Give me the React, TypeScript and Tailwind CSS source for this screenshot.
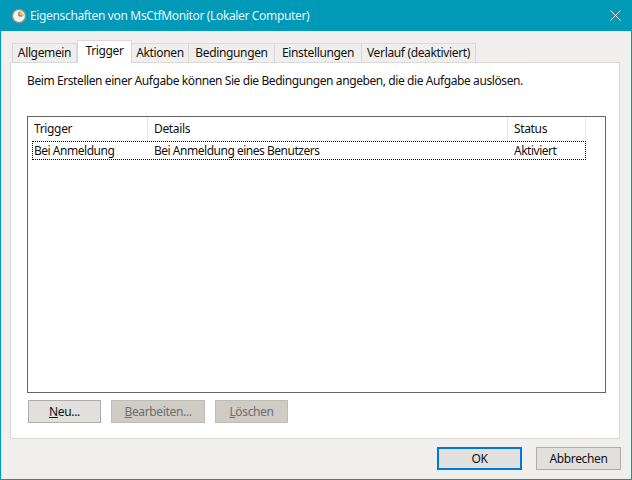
import React from 'react';

const tabs = [
  { label: 'Allgemein', width: 'w-[65px]' },
  { label: 'Trigger', width: 'w-[55px]', active: true },
  { label: 'Aktionen', width: 'w-[57px]' },
  { label: 'Bedingungen', width: 'w-[86px]' },
  { label: 'Einstellungen', width: 'w-[87px]' },
  { label: 'Verlauf (deaktiviert)', width: 'w-[114px]' },
];

function ClockIcon() {
  return (
    <svg width="16" height="16" viewBox="0 0 16 16" aria-hidden="true">
      <circle cx="8" cy="8" r="6.6" fill="#f4f2ec" stroke="#8f8f8a" strokeWidth="1.4" />
      <path d="M8 3 A5 5 0 0 1 13 8 L8 8 Z" fill="#f2c777" />
      <path d="M8 4v4h3.4" fill="none" stroke="#5d5d5d" strokeWidth="1" />
    </svg>
  );
}

function DialogButton({ width, disabled, primary, accel, rest }: { width: string; disabled?: boolean; primary?: boolean; accel?: string; rest: string }) {
  const look = primary
    ? 'border-2 border-[#0078d7] bg-[#e1e0dc] text-[#111]'
    : disabled
      ? 'border border-[#bfbcb6] bg-[#cfccc6] text-[#6d6d6d]'
      : 'border border-[#adadad] bg-[#e1e0dc] text-[#111]';
  return (
    <div className={`flex h-[23px] items-center justify-center text-[12px] ${width} ${look}`}>
      {accel && <span className="underline">{accel}</span>}
      {rest}
    </div>
  );
}

export default function App() {
  return (
    <div className="flex h-[480px] w-[632px] flex-col border-x border-b border-[#0099b8] bg-[#f0efed] font-['Noto_Sans',sans-serif] text-[12px] leading-[16px] tracking-[-0.35px] text-[#111]">
      <div className="flex h-[31px] shrink-0 items-center bg-[#0099b8] pl-[10px] pr-[10px] text-[#e8f7fa]">
        <ClockIcon />
        <span className="ml-[3px]">Eigenschaften von MsCtfMonitor (Lokaler Computer)</span>
        <svg className="ml-auto" width="11" height="11" viewBox="0 0 11 11" aria-hidden="true">
          <path d="M0.5 0.5l10 10M10.5 0.5l-10 10" stroke="#fff" strokeWidth="1" />
        </svg>
      </div>

      <div className="ml-[11px] mt-[9px] flex h-[22px] items-end">
        {tabs.map((t) =>
          t.active ? (
            <div key={t.label} className={`relative z-10 -mb-px flex h-[23px] items-start justify-center border border-b-0 border-[#d9d9d9] bg-white pt-[2px] ${t.width}`}>
              {t.label}
            </div>
          ) : (
            <div key={t.label} className={`flex h-[19px] items-center justify-center border border-b-0 border-l-0 first:border-l border-[#d9d9d9] bg-[#f0efed] ${t.width}`}>
              {t.label}
            </div>
          ),
        )}
      </div>

      <div className="ml-[9px] flex h-[377px] w-[610px] flex-col border border-[#d9d9d9] bg-white pl-[16px] pr-[14px]">
        <p className="mt-[10px] h-[16px] tracking-[-0.41px]">Beim Erstellen einer Aufgabe können Sie die Bedingungen angeben, die die Aufgabe auslösen.</p>

        <div className="mt-[27px] h-[277px] w-[579px] border border-[#646464] bg-white">
          <div className="flex h-[24px] w-[558px]">
            <div className="flex w-[120px] items-center border-r border-[#e5e5e5] pl-[6px]">Trigger</div>
            <div className="flex w-[360px] items-center border-r border-[#e5e5e5] pl-[6px]">Details</div>
            <div className="flex w-[78px] items-center border-r border-[#e5e5e5] pl-[6px]">Status</div>
          </div>
          <div className="ml-[4px] flex h-[19px] w-[554px] items-center border border-dotted border-black tracking-[-0.48px]">
            <div className="w-[116px] pl-[1px]">Bei Anmeldung</div>
            <div className="w-[360px] pl-[5px]">Bei Anmeldung eines Benutzers</div>
            <div className="pl-[5px]">Aktiviert</div>
          </div>
        </div>

        <div className="ml-px mt-[7px] flex gap-[10px]">
          <DialogButton width="w-[73px]" accel="N" rest="eu..." />
          <DialogButton width="w-[94px]" disabled accel="B" rest="earbeiten..." />
          <DialogButton width="w-[73px]" disabled accel="L" rest="öschen" />
        </div>
      </div>

      <div className="mt-[8px] flex justify-end gap-[14px] pr-[10px]">
        <DialogButton width="w-[85px]" primary rest="OK" />
        <DialogButton width="w-[85px]" rest="Abbrechen" />
      </div>
    </div>
  );
}
